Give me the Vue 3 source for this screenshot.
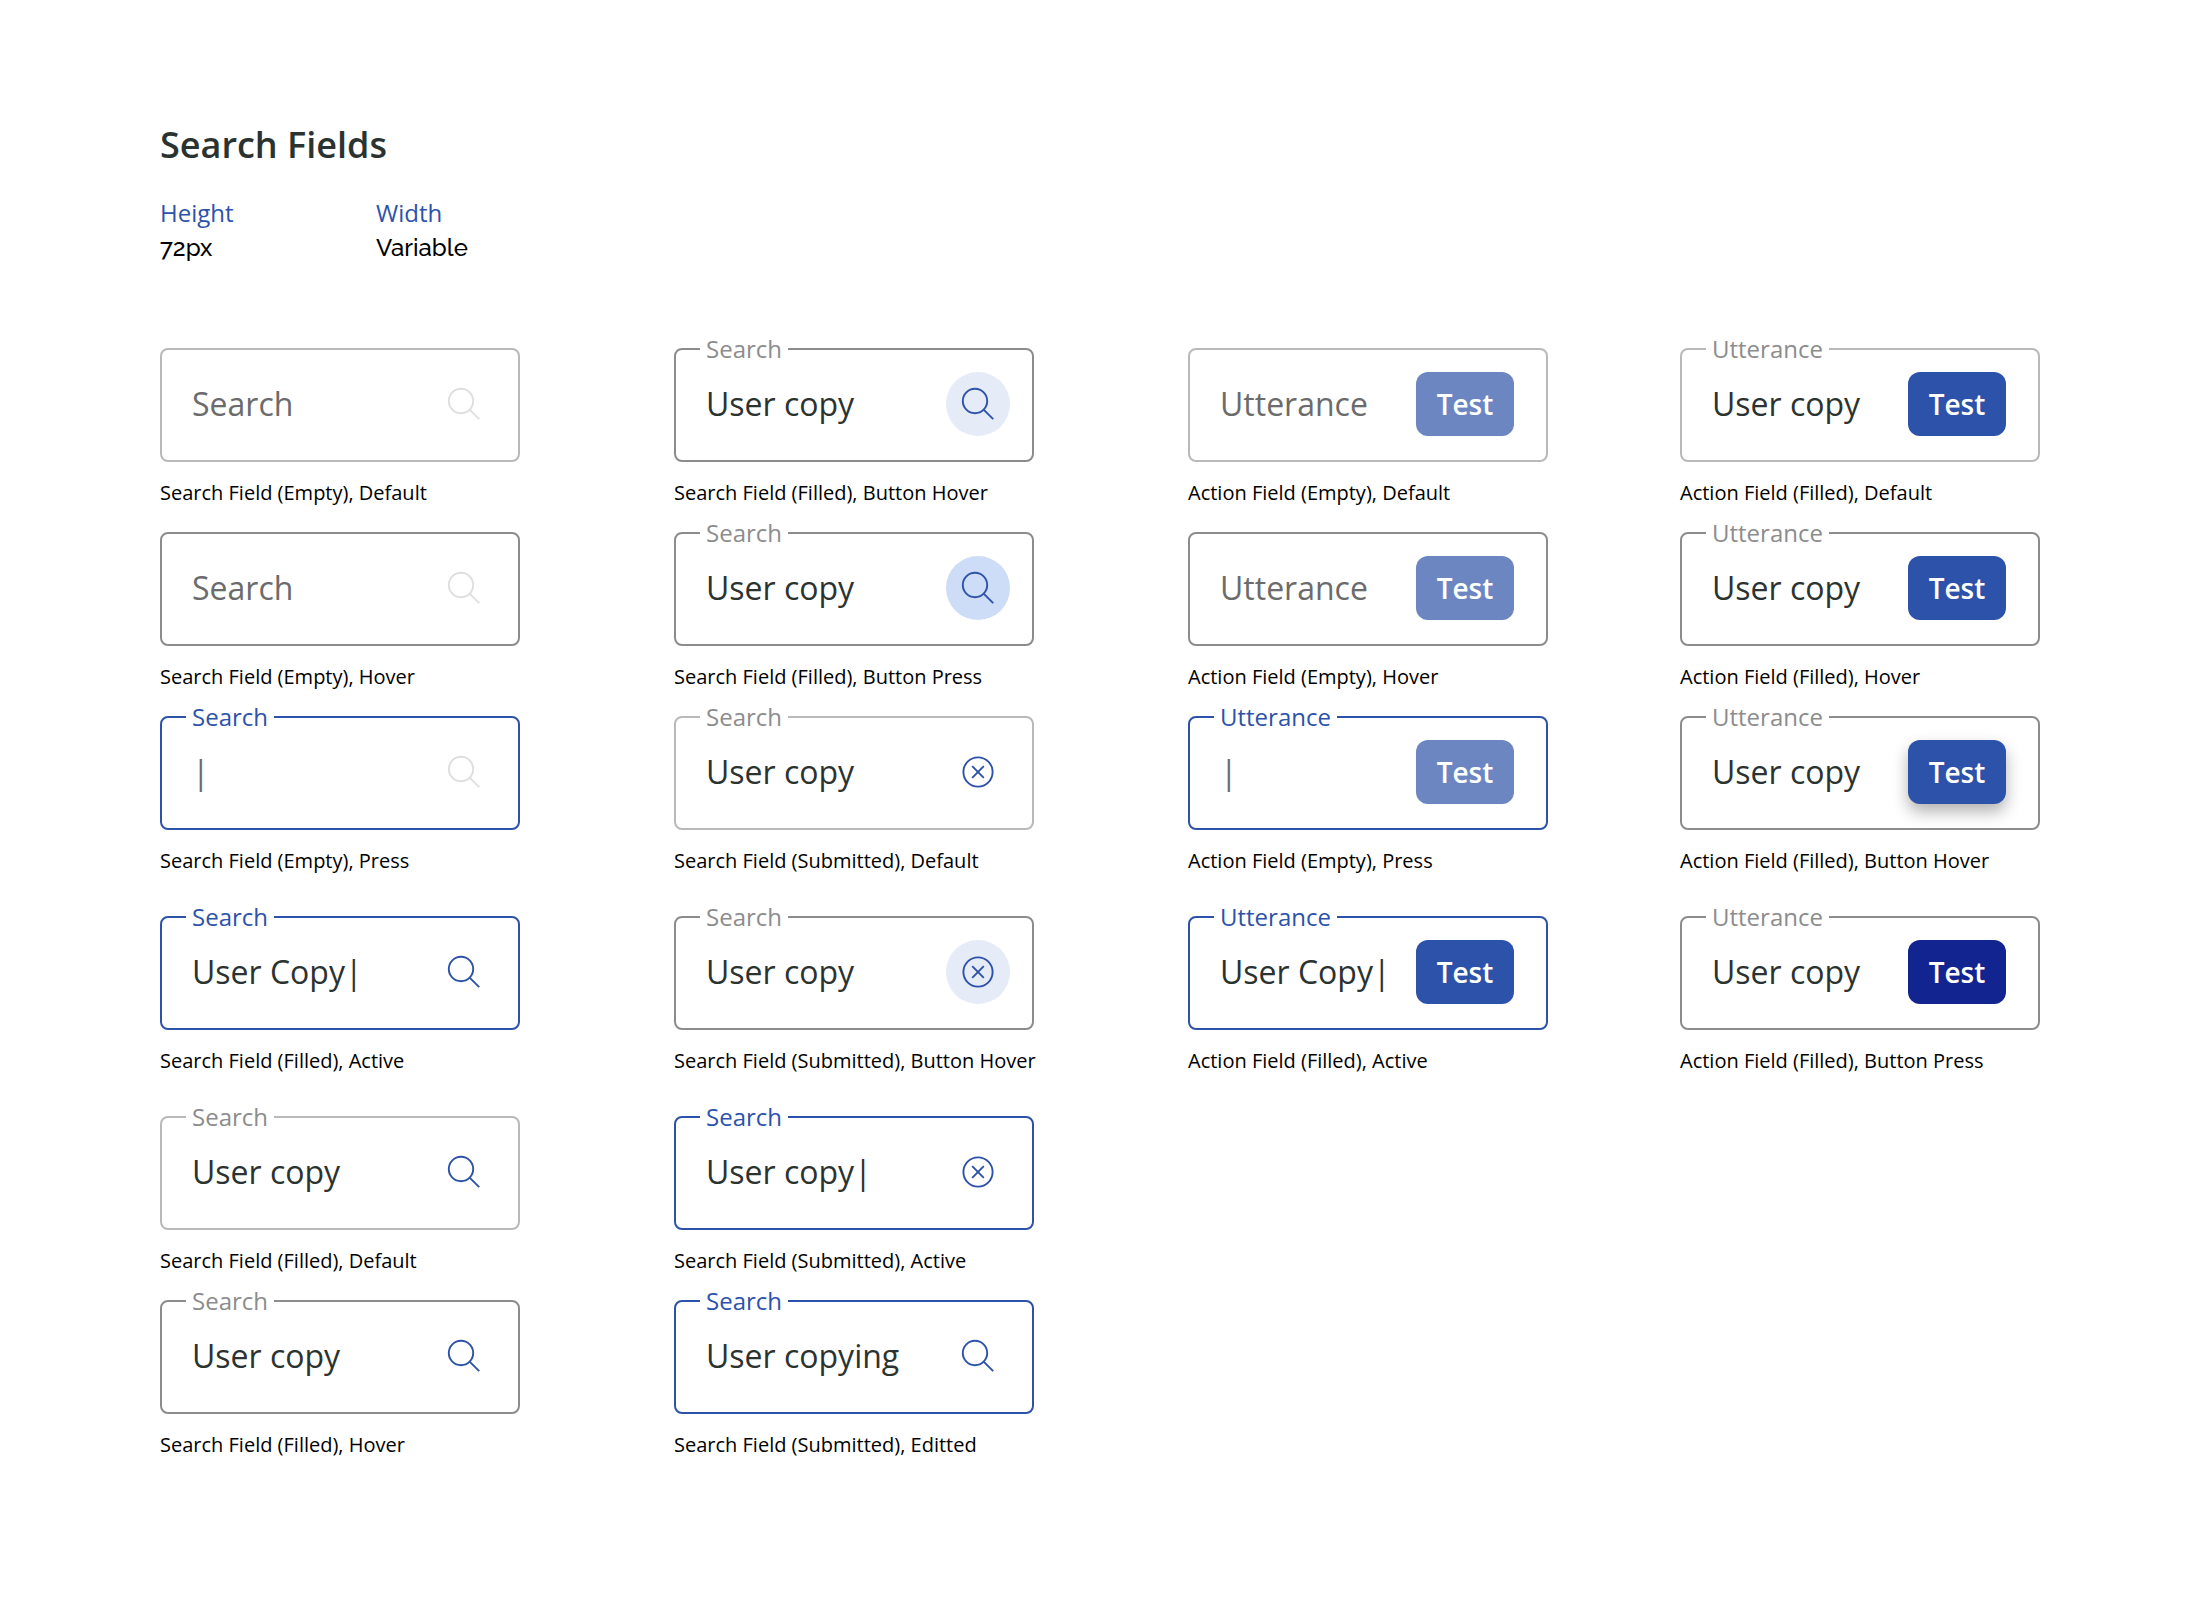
<script setup>
const columns = [
  {
    name: 'search-a',
    fields: [
      { label: 'Search', value: '', tone: 'default', action: 'search', state: 'disabled', caption: 'Search Field (Empty), Default' },
      { label: 'Search', value: '', tone: 'hover', action: 'search', state: 'disabled', caption: 'Search Field (Empty), Hover' },
      { label: 'Search', value: '|', tone: 'active', muted: true, action: 'search', state: 'disabled', caption: 'Search Field (Empty), Press' },
      { label: 'Search', value: 'User Copy|', tone: 'active', action: 'search', spaced: true, caption: 'Search Field (Filled), Active' },
      { label: 'Search', value: 'User copy', tone: 'default', action: 'search', spaced: true, caption: 'Search Field (Filled), Default' },
      { label: 'Search', value: 'User copy', tone: 'hover', action: 'search', caption: 'Search Field (Filled), Hover' },
    ],
  },
  {
    name: 'search-b',
    fields: [
      { label: 'Search', value: 'User copy', tone: 'hover', action: 'search', state: 'hovered', caption: 'Search Field (Filled), Button Hover' },
      { label: 'Search', value: 'User copy', tone: 'hover', action: 'search', state: 'pressed', caption: 'Search Field (Filled), Button Press' },
      { label: 'Search', value: 'User copy', tone: 'default', action: 'clear', caption: 'Search Field (Submitted), Default' },
      { label: 'Search', value: 'User copy', tone: 'hover', action: 'clear', state: 'hovered', spaced: true, caption: 'Search Field (Submitted), Button Hover' },
      { label: 'Search', value: 'User copy|', tone: 'active', action: 'clear', spaced: true, caption: 'Search Field (Submitted), Active' },
      { label: 'Search', value: 'User copying', tone: 'active', action: 'search', caption: 'Search Field (Submitted), Editted' },
    ],
  },
  {
    name: 'action-a',
    fields: [
      { label: 'Utterance', value: '', tone: 'default', action: 'test', state: 'disabled', caption: 'Action Field (Empty), Default' },
      { label: 'Utterance', value: '', tone: 'hover', action: 'test', state: 'disabled', caption: 'Action Field (Empty), Hover' },
      { label: 'Utterance', value: '|', tone: 'active', muted: true, action: 'test', state: 'disabled', caption: 'Action Field (Empty), Press' },
      { label: 'Utterance', value: 'User Copy|', tone: 'active', action: 'test', spaced: true, caption: 'Action Field (Filled), Active' },
    ],
  },
  {
    name: 'action-b',
    fields: [
      { label: 'Utterance', value: 'User copy', tone: 'default', action: 'test', caption: 'Action Field (Filled), Default' },
      { label: 'Utterance', value: 'User copy', tone: 'hover', action: 'test', caption: 'Action Field (Filled), Hover' },
      { label: 'Utterance', value: 'User copy', tone: 'hover', action: 'test', state: 'hovered', caption: 'Action Field (Filled), Button Hover' },
      { label: 'Utterance', value: 'User copy', tone: 'hover', action: 'test', state: 'pressed', spaced: true, caption: 'Action Field (Filled), Button Press' },
    ],
  },
]
</script>

<template>
  <main class="page">
    <header>
      <h1 class="title">Search Fields</h1>
      <dl class="specs">
        <div class="spec">
          <dt>Height</dt>
          <dd>72px</dd>
        </div>
        <div class="spec">
          <dt>Width</dt>
          <dd>Variable</dd>
        </div>
      </dl>
    </header>

    <div class="columns">
      <section v-for="column in columns" :key="column.name" class="column">
        <figure
          v-for="(field, i) in column.fields"
          :key="field.caption"
          class="sample"
          :class="{ spaced: field.spaced }"
        >
          <div class="field" :class="[field.tone, { 'with-test': field.action === 'test' }]">
            <label v-if="field.value" class="label" :for="`${column.name}-${i}`">{{ field.label }}</label>
            <input
              :id="`${column.name}-${i}`"
              class="input"
              :class="{ muted: field.muted }"
              type="text"
              :value="field.value"
              :placeholder="field.value ? null : field.label"
              :aria-label="field.value ? null : field.label"
            />
            <button
              v-if="field.action === 'test'"
              type="button"
              class="test"
              :class="field.state"
              :disabled="field.state === 'disabled'"
            >Test</button>
            <button
              v-else
              type="button"
              class="icon-button"
              :class="field.state"
              :disabled="field.state === 'disabled'"
              :aria-label="field.action === 'clear' ? 'Clear' : 'Search'"
            >
              <svg v-if="field.action === 'search'" viewBox="0 0 64 64" aria-hidden="true">
                <circle cx="29" cy="29" r="12.2" />
                <path d="M37.6 37.6 L47.2 47.2" />
              </svg>
              <svg v-else viewBox="0 0 64 64" aria-hidden="true">
                <circle cx="32" cy="32" r="14.6" />
                <path d="M26.2 26.2 L37.8 37.8 M37.8 26.2 L26.2 37.8" />
              </svg>
            </button>
          </div>
          <figcaption class="caption">{{ field.caption }}</figcaption>
        </figure>
      </section>
    </div>
  </main>
</template>

<style>
body {
  margin: 0;
  background: #fff;
}
</style>

<style scoped>
.page {
  --blue: #2d52a9;
  --ink: #2b3331;
  box-sizing: border-box;
  padding: 121px 160px;
  font-family: "Open Sans", "Noto Sans", sans-serif;
  color: #000;
}

.title {
  margin: 0 0 27px;
  font-size: 36px;
  line-height: 48px;
  font-weight: 600;
  color: var(--ink);
}

.specs {
  display: flex;
  margin: 0 0 82px;
  font-size: 24px;
  line-height: 34px;
}

.spec {
  width: 216px;
}

.spec dt {
  color: var(--blue);
}

.spec dd {
  margin: 0;
  font-family: Raleway, Lato, sans-serif;
  font-weight: 500;
  line-height: 36px;
}

.columns {
  display: flex;
  align-items: flex-start;
}

.column {
  display: flex;
  flex: 1 1 0;
  flex-direction: column;
  gap: 25px;
  min-width: 0;
}

.column + .column {
  margin-left: 154px;
}

.column:last-child {
  margin-left: 132px;
}

.sample {
  margin: 0;
}

.spaced {
  margin-top: 16px;
}

.field {
  position: relative;
  display: flex;
  align-items: center;
  padding: 22px 22px 24px 30px;
  border: 2px solid #b9b9b9;
  border-radius: 8px;
}

.field.with-test {
  padding-right: 32px;
}

.field.hover {
  border-color: #8c8c8c;
}

.field.active {
  border-color: var(--blue);
}

.label {
  position: absolute;
  top: -18px;
  left: 24px;
  padding: 0 6px;
  background: #fff;
  font-size: 24px;
  line-height: 34px;
  color: #8c8c8c;
}

.active .label {
  color: var(--blue);
}

.input {
  box-sizing: border-box;
  flex: 1;
  min-width: 0;
  height: 64px;
  padding: 0 0 2px;
  border: 0;
  outline: 0;
  background: none;
  font: inherit;
  font-size: 32px;
  color: var(--ink);
}

.input.muted {
  color: #6b6b6b;
}

.input::placeholder {
  color: #6b6b6b;
  opacity: 1;
}

.test {
  min-width: 98px;
  height: 64px;
  padding: 0 20px;
  border: 0;
  border-radius: 12px;
  background: var(--blue);
  font: inherit;
  font-size: 28px;
  font-weight: 600;
  color: #fff;
}

.test.disabled {
  background: #6c86c2;
}

.test.hovered {
  box-shadow: 0 8px 16px rgba(0, 0, 0, 0.3);
}

.test.pressed {
  background: #11248f;
}

.icon-button {
  width: 64px;
  height: 64px;
  padding: 0;
  border: 0;
  border-radius: 50%;
  background: none;
  color: var(--blue);
}

.icon-button.disabled {
  color: #dedede;
}

.icon-button.hovered {
  background: #e5ebf7;
}

.icon-button.pressed {
  background: #cdddf7;
}

.icon-button svg {
  display: block;
  width: 64px;
  height: 64px;
  fill: none;
  stroke: currentColor;
  stroke-width: 1.9;
}

.caption {
  margin-top: 17px;
  font-size: 20px;
  line-height: 28px;
  white-space: nowrap;
}
</style>
